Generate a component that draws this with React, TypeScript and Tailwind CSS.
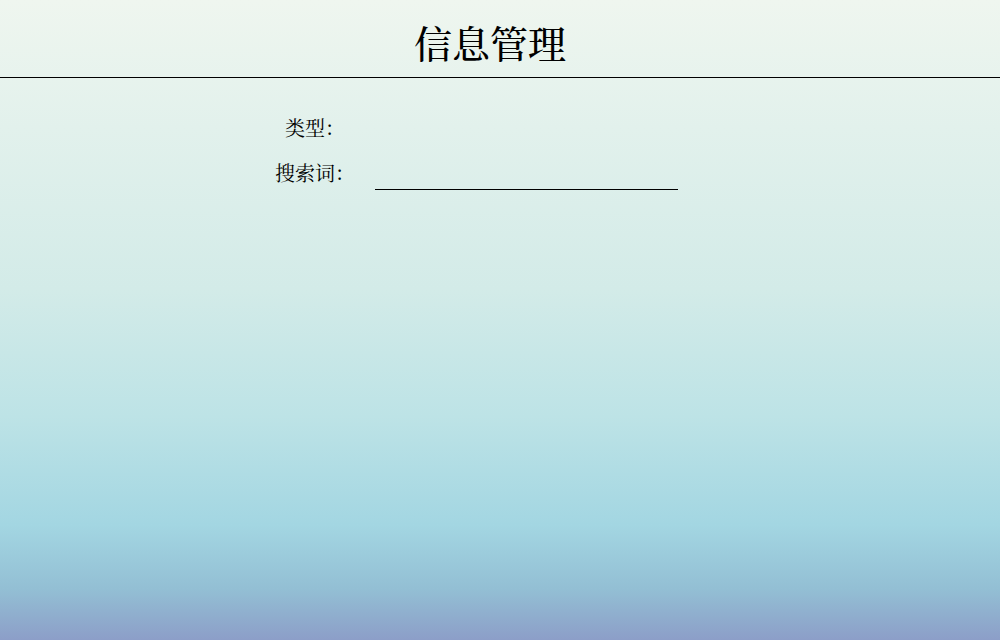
import { useState } from 'react'

export default function App() {
  const [keyword, setKeyword] = useState('')

  return (
    <div className="min-h-[640px] w-full bg-[linear-gradient(to_bottom,#eff6ef_0%,#e2f1ec_20%,#d3ebe8_45%,#bde3e6_65%,#a3d6e2_82%,#93bfd4_92%,#8c9ec8_100%)] font-['Noto_Serif_CJK_SC','Liberation_Serif','Noto_Sans_CJK_SC',serif] text-black">
      <header className="h-[78px] border-b border-black flex items-center justify-center">
        <h1 className="text-[38px] leading-none font-medium pr-[20px] pt-[6px]">信息管理</h1>
      </header>

      <form className="pt-[34px] pl-[265px]" onSubmit={(e) => e.preventDefault()}>
        <div className="flex items-center h-[32px]">
          <label className="w-[100px] text-center text-[20px]">类型：</label>
        </div>
        <div className="flex items-end h-[48px] pb-[2px]">
          <label className="w-[100px] text-center text-[20px] pb-[2px]">搜索词：</label>
          <input
            type="text"
            value={keyword}
            onChange={(e) => setKeyword(e.target.value)}
            className="ml-[10px] w-[303px] h-[30px] bg-transparent border-b border-black outline-none text-[18px]"
          />
        </div>
      </form>
    </div>
  )
}
